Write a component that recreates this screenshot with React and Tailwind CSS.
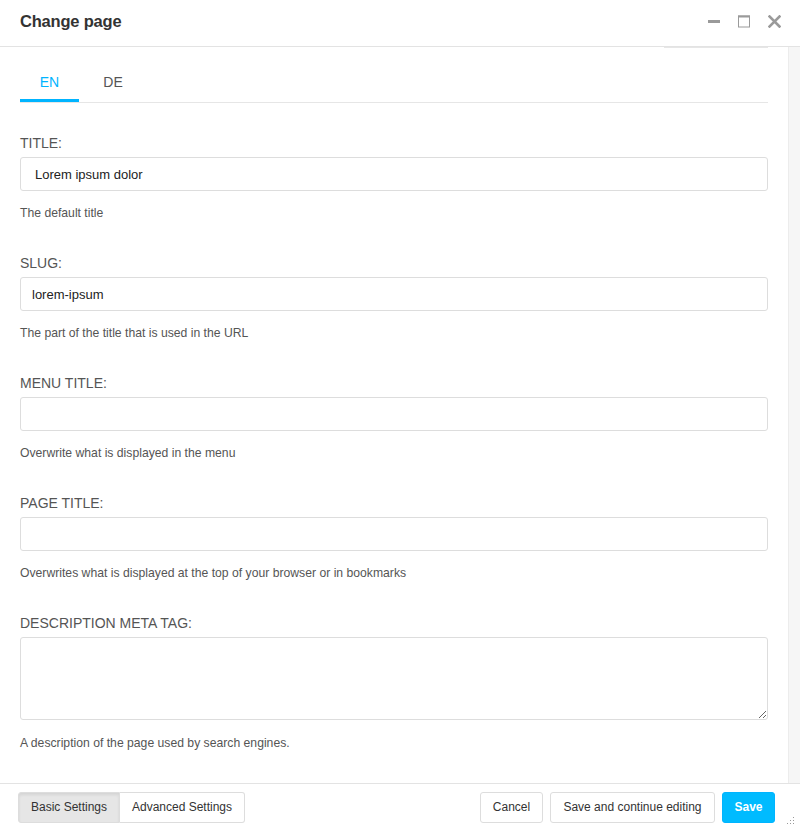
import React from "react";

const fields = [
  { label: "Title:", value: "Lorem ipsum dolor", help: "The default title", pad: "pl-[14px]" },
  { label: "Slug:", value: "lorem-ipsum", help: "The part of the title that is used in the URL", pad: "pl-[11px]" },
  { label: "Menu title:", value: "", help: "Overwrite what is displayed in the menu", pad: "pl-[11px]" },
  { label: "Page title:", value: "", help: "Overwrites what is displayed at the top of your browser or in bookmarks", pad: "pl-[11px]" },
];

const Field = ({ label, value, help, pad, first }) => (
  <div className={first ? "pt-[31px]" : "pt-[33px]"}>
    <label className="block text-[14px] leading-[18px] uppercase text-[#555]">{label}</label>
    <input
      readOnly
      value={value}
      className={`mt-[5px] block w-full h-[34px] ${pad} border border-[#ddd] rounded-[3px] text-[13px] text-[#222] outline-none`}
    />
    <p className="mt-[14px] text-[12.2px] leading-[16px] text-[#555]">{help}</p>
  </div>
);

const App = () => {
  return (
    <div
      className="w-[800px] h-[830px] bg-white flex flex-col overflow-hidden"
      style={{ fontFamily: '"Liberation Sans", Arial, sans-serif' }}
    >
      {/* header */}
      <div className="h-[47px] shrink-0 flex items-center justify-between border-b border-[#e3e3e3] pl-[20px] pr-[19px]">
        <h1 className="text-[16.5px] font-bold text-[#333] tracking-[-0.2px] -mt-[3px]">Change page</h1>
        <div className="flex items-center gap-[17px] -mt-[4px]">
          <svg width="13" height="13" viewBox="0 0 13 13">
            <rect x="0" y="5" width="12" height="3" fill="#9a9a9a" />
          </svg>
          <svg width="13" height="13" viewBox="0 0 13 13">
            <rect x="0.5" y="1" width="11" height="11" fill="none" stroke="#9a9a9a" strokeWidth="1" />
            <rect x="0" y="0.5" width="12" height="2" fill="#9a9a9a" />
          </svg>
          <svg width="13" height="13" viewBox="0 0 13 13">
            <path d="M1.5 1.5 L11.5 11.5 M11.5 1.5 L1.5 11.5" stroke="#9a9a9a" strokeWidth="2.6" strokeLinecap="square" />
          </svg>
        </div>
      </div>

      {/* body */}
      <div className="flex-1 flex min-h-0">
        <div className="flex-1 px-[20px] relative">
          <div className="absolute right-[20px] top-0 w-[104px] h-[1px] bg-[#e6e6e6]" />
          {/* tabs */}
          <div className="mt-[23px] flex border-b border-[#e6e6e6]">
            <div className="w-[59px] h-[32px] flex items-start justify-center pt-[2px] text-[14px] text-[#00b4ff] border-b-[3px] border-[#00b4ff] -mb-[1px]">
              EN
            </div>
            <div className="w-[68px] h-[32px] flex items-start justify-center pt-[2px] text-[14px] text-[#555]">
              DE
            </div>
          </div>

          {fields.map((f, i) => (
            <Field key={f.label} first={i === 0} {...f} />
          ))}

          <div className="pt-[33px]">
            <label className="block text-[14px] leading-[18px] uppercase text-[#555]">Description meta tag:</label>
            <textarea
              readOnly
              className="mt-[5px] block w-full h-[83px] border border-[#ddd] rounded-[3px] outline-none"
            />
            <p className="mt-[15px] text-[12.2px] leading-[16px] text-[#555]">
              A description of the page used by search engines.
            </p>
          </div>
        </div>
        <div className="w-[12px] shrink-0 bg-[#f6f6f6] border-l border-[#ececec]" />
      </div>

      {/* footer */}
      <div className="h-[47px] shrink-0 border-t border-[#e3e3e3] flex items-center justify-between pl-[18px] pr-[25px] relative">
        <div className="flex">
          <button className="h-[31px] w-[102px] text-[12px] text-[#333] bg-[#e6e6e6] border border-[#ddd] rounded-l-[3px] shadow-[inset_0_2px_3px_rgba(0,0,0,0.08)]">
            Basic Settings
          </button>
          <button className="h-[31px] w-[125px] text-[12px] text-[#333] bg-white border border-l-0 border-[#ddd] rounded-r-[3px]">
            Advanced Settings
          </button>
        </div>
        <div className="flex gap-[7px]">
          <button className="h-[31px] w-[63px] text-[12px] text-[#333] bg-white border border-[#ddd] rounded-[3px]">
            Cancel
          </button>
          <button className="h-[31px] w-[165px] text-[12px] text-[#333] bg-white border border-[#ddd] rounded-[3px]">
            Save and continue editing
          </button>
          <button className="h-[31px] w-[53px] text-[12px] font-bold text-white bg-[#00bbff] border border-[#00b4ff] rounded-[3px]">
            Save
          </button>
        </div>
        <svg className="absolute right-[4px] bottom-[4px]" width="10" height="10" viewBox="0 0 10 10">
          <rect x="7" y="1" width="1" height="1" fill="#999" />
          <rect x="4" y="4" width="1" height="1" fill="#999" />
          <rect x="7" y="4" width="1" height="1" fill="#999" />
          <rect x="1" y="7" width="1" height="1" fill="#999" />
          <rect x="4" y="7" width="1" height="1" fill="#999" />
          <rect x="7" y="7" width="1" height="1" fill="#999" />
        </svg>
      </div>
    </div>
  );
};

export default App;
